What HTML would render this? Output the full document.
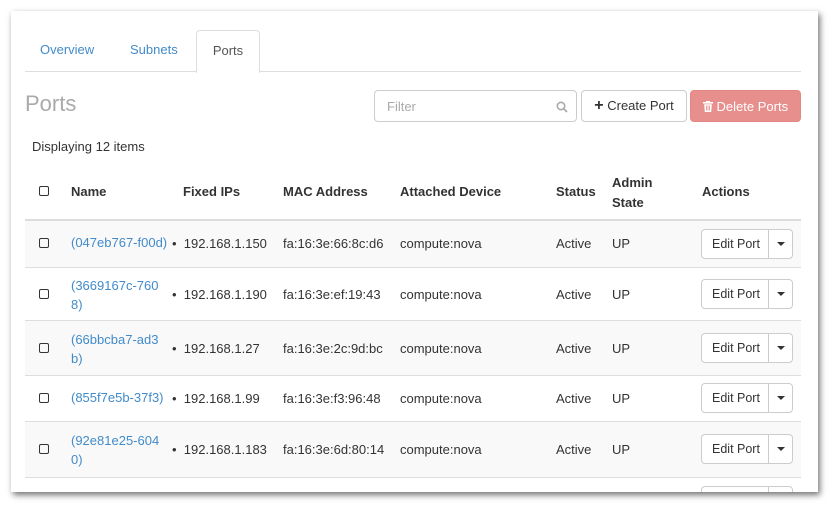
<!DOCTYPE html>
<html><head><meta charset="utf-8"><style>
*{box-sizing:border-box;margin:0;padding:0}
body{width:837px;height:511px;background:#fff;font-family:"Liberation Sans",sans-serif;font-size:13px;color:#333;position:relative;overflow:hidden}
.panel{position:absolute;left:11px;top:11px;width:807px;height:481px;background:#fff;box-shadow:2px 3px 6px rgba(0,0,0,.55);overflow:hidden}
.a{position:absolute;white-space:nowrap}
.link{color:#428bca}
.tabline{position:absolute;left:14px;top:60px;width:776px;border-top:1px solid #ddd}
.tab{position:absolute;left:185px;top:19px;width:64px;height:43px;border:1px solid #ddd;border-bottom:none;border-radius:4px 4px 0 0;background:#fff;color:#555;text-align:center;line-height:40px}
.btn{position:absolute;border:1px solid #ccc;border-radius:4px;background:#fff;text-align:center}
.row{position:absolute;left:14px;width:776px;border-top:1px solid #ddd}
.g{background:#f9f9f9}
.cb{position:absolute;left:28px;width:10px;height:10px;border:1px solid #333;border-radius:2px}
.th{font-weight:bold}
.ep{font-size:12.5px}
.car{position:absolute;left:66px;top:0;height:28px;border-left:1px solid #ccc;width:25px}
.car:after{content:"";position:absolute;left:8px;top:12px;border-left:4px solid transparent;border-right:4px solid transparent;border-top:4px solid #333}
</style></head><body>
<div class="panel">
<div class="tabline"></div>
<div class="a link" style="left:29px;top:31px">Overview</div>
<div class="a link" style="left:119px;top:31px">Subnets</div>
<div class="tab">Ports</div>
<div class="a" style="left:14px;top:80px;font-size:22px;color:#aaa">Ports</div>
<div class="btn" style="left:363px;top:79px;width:203px;height:32px;text-align:left;padding:8px 12px;color:#aaa">Filter
<svg style="position:absolute;right:8px;top:10px" width="12" height="12" viewBox="0 0 12 12"><circle cx="5" cy="5" r="3.7" fill="none" stroke="#aaa" stroke-width="1.6"/><path d="M7.8 7.8L11 11" stroke="#aaa" stroke-width="1.8"/></svg></div>
<div class="btn" style="left:570px;top:79px;width:106px;height:32px;line-height:30px;color:#333"><b style="font-size:16px">+</b> Create Port</div>
<div class="btn" style="left:679px;top:79px;width:111px;height:32px;line-height:31px;background:#e78f8d;border-color:#e48784;color:#fff"><svg width="10" height="11" viewBox="0 0 10 11" style="vertical-align:-1px"><rect x="0" y="1" width="10" height="1.6" fill="#fff"/><rect x="3" y="0" width="4" height="1.5" fill="#fff"/><path d="M1.2 3.2h7.6l-.6 7.8H1.8z" fill="#fff"/><path d="M3.5 4.5v5M5 4.5v5M6.5 4.5v5" stroke="#e78f8d" stroke-width=".8"/></svg> Delete Ports</div>
<div class="a" style="left:21px;top:128px">Displaying 12 items</div>

<div class="cb" style="top:175px"></div>
<div class="a th" style="left:60px;top:173px">Name</div>
<div class="a th" style="left:172px;top:173px">Fixed IPs</div>
<div class="a th" style="left:272px;top:173px">MAC Address</div>
<div class="a th" style="left:389px;top:173px">Attached Device</div>
<div class="a th" style="left:545px;top:173px">Status</div>
<div class="a th" style="left:601px;top:162px;line-height:20px;white-space:normal">Admin<br>State</div>
<div class="a th" style="left:691px;top:173px">Actions</div>

<div class="row g" style="top:208px;height:48px;border-top:2px solid #ddd"></div>
<div class="row" style="top:256px;height:53px"></div>
<div class="row g" style="top:309px;height:55px"></div>
<div class="row" style="top:364px;height:46px"></div>
<div class="row g" style="top:410px;height:56px"></div>
<div class="row" style="top:466px;height:30px"></div>

<div class="cb" style="top:227px"></div><div class="a link" style="left:60px;top:224px">(047eb767-f00d)</div>
<div class="a" style="left:161px;top:225px">•&nbsp; 192.168.1.150</div><div class="a" style="left:272px;top:225px">fa:16:3e:66:8c:d6</div><div class="a" style="left:389px;top:225px">compute:nova</div><div class="a" style="left:545px;top:225px">Active</div><div class="a" style="left:601px;top:225px">UP</div>
<div class="btn ep" style="left:690px;top:218px;width:92px;height:30px;line-height:28px;text-align:left;padding-left:10px">Edit Port<span class="car"></span></div>

<div class="cb" style="top:278px"></div><div class="a link" style="left:60px;top:265px;line-height:19px">(3669167c-760<br>8)</div>
<div class="a" style="left:161px;top:276px">•&nbsp; 192.168.1.190</div><div class="a" style="left:272px;top:276px">fa:16:3e:ef:19:43</div><div class="a" style="left:389px;top:276px">compute:nova</div><div class="a" style="left:545px;top:276px">Active</div><div class="a" style="left:601px;top:276px">UP</div>
<div class="btn ep" style="left:690px;top:268px;width:92px;height:30px;line-height:28px;text-align:left;padding-left:10px">Edit Port<span class="car"></span></div>

<div class="cb" style="top:332px"></div><div class="a link" style="left:60px;top:319px;line-height:19px">(66bbcba7-ad3<br>b)</div>
<div class="a" style="left:161px;top:330px">•&nbsp; 192.168.1.27</div><div class="a" style="left:272px;top:330px">fa:16:3e:2c:9d:bc</div><div class="a" style="left:389px;top:330px">compute:nova</div><div class="a" style="left:545px;top:330px">Active</div><div class="a" style="left:601px;top:330px">UP</div>
<div class="btn ep" style="left:690px;top:322px;width:92px;height:30px;line-height:28px;text-align:left;padding-left:10px">Edit Port<span class="car"></span></div>

<div class="cb" style="top:382px"></div><div class="a link" style="left:60px;top:379px">(855f7e5b-37f3)</div>
<div class="a" style="left:161px;top:380px">•&nbsp; 192.168.1.99</div><div class="a" style="left:272px;top:380px">fa:16:3e:f3:96:48</div><div class="a" style="left:389px;top:380px">compute:nova</div><div class="a" style="left:545px;top:380px">Active</div><div class="a" style="left:601px;top:380px">UP</div>
<div class="btn ep" style="left:690px;top:372px;width:92px;height:30px;line-height:28px;text-align:left;padding-left:10px">Edit Port<span class="car"></span></div>

<div class="cb" style="top:433px"></div><div class="a link" style="left:60px;top:420px;line-height:19px">(92e81e25-604<br>0)</div>
<div class="a" style="left:161px;top:431px">•&nbsp; 192.168.1.183</div><div class="a" style="left:272px;top:431px">fa:16:3e:6d:80:14</div><div class="a" style="left:389px;top:431px">compute:nova</div><div class="a" style="left:545px;top:431px">Active</div><div class="a" style="left:601px;top:431px">UP</div>
<div class="btn ep" style="left:690px;top:423px;width:92px;height:30px;line-height:28px;text-align:left;padding-left:10px">Edit Port<span class="car"></span></div>

<div class="btn" style="left:690px;top:475px;width:92px;height:30px"><span style="position:absolute;left:66px;top:0;height:28px;border-left:1px solid #ccc"></span></div>
</div>
</body></html>
